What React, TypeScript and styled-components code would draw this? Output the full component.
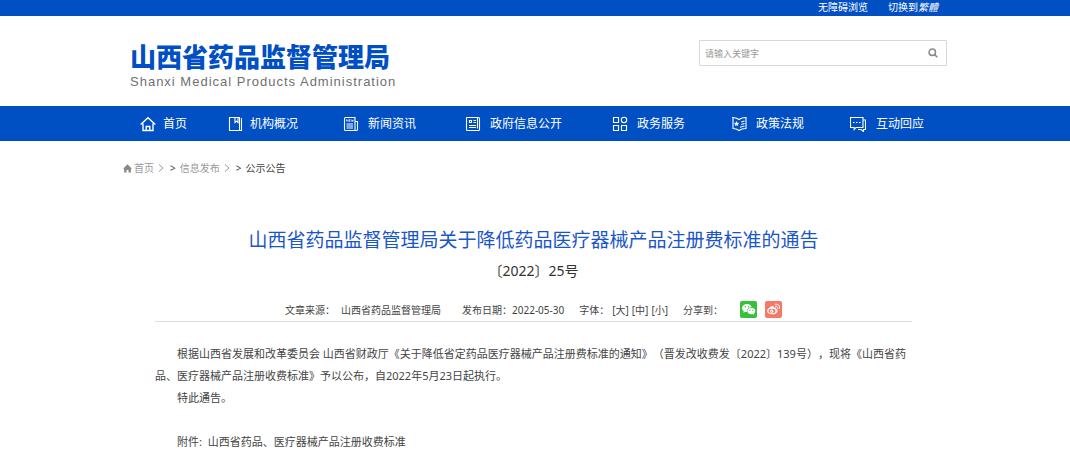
import React from "react";
import styled, { createGlobalStyle } from "styled-components";

const BLUE = "#0050c4";

const GlobalStyle = createGlobalStyle`
  * { box-sizing: border-box; }
  body {
    margin: 0;
    background: #fff;
    color: #444;
    font-family: "Noto Sans", "Noto Sans CJK SC", sans-serif;
    font-size: 10px;
    text-spacing-trim: space-all;
  }
  a { color: inherit; text-decoration: none; }
  h1, h2, p { margin: 0; font-weight: 400; }
`;

const Container = styled.div`
  width: 100%;
  max-width: 824px;
  margin: 0 auto;
`;

const TopBar = styled.div`
  background: ${BLUE};
  color: #fff;
`;

const TopLinks = styled(Container)`
  display: flex;
  justify-content: flex-end;
  gap: 20px;
  height: 16px;
  padding-right: 9px;
  line-height: 14px;
`;

const Header = styled(Container)`
  display: flex;
  justify-content: space-between;
  align-items: flex-start;
  height: 90px;
  padding: 24px 0 0 7px;
`;

const Brand = styled.a`
  display: block;
`;

const BrandName = styled.span`
  display: block;
  color: ${BLUE};
  font-family: "Noto Sans CJK SC", sans-serif;
  font-size: 26px;
  font-weight: 900;
  line-height: 32px;
`;

const BrandLatin = styled.span`
  display: block;
  color: #707070;
  font-family: "Liberation Sans", sans-serif;
  font-size: 13px;
  letter-spacing: 1px;
  line-height: 20px;
`;

const Search = styled.form`
  display: flex;
  align-items: center;
  width: 248px;
  height: 26px;
  border: 1px solid #d8d8d8;
  border-radius: 1px;
`;

const SearchInput = styled.input`
  flex: 1;
  min-width: 0;
  padding: 0 5px;
  border: 0;
  outline: 0;
  background: none;
  font: inherit;
  font-size: 9px;
  &::placeholder { color: #999; opacity: 1; }
`;

const SearchButton = styled.button`
  display: flex;
  padding: 0 8px;
  border: 0;
  background: none;
`;

const NavBar = styled.nav`
  background: ${BLUE};
  color: #fff;
`;

const NavList = styled(Container)`
  display: grid;
  grid-template-columns: 88fr 115fr 122fr 147fr 119fr 119fr 97fr;
  align-items: center;
  height: 35px;
  padding-left: 17px;
`;

const NavLink = styled.a<{ $gap: number }>`
  display: flex;
  align-items: center;
  gap: ${(p) => p.$gap}px;
  font-size: 12px;
  line-height: 18px;
  white-space: nowrap;
  svg { flex: none; }
`;

const Breadcrumb = styled(Container)`
  display: flex;
  align-items: center;
  padding-top: 19px;
  line-height: 16px;
  color: #999;
`;

const Crumb = styled.a`
  display: flex;
  align-items: center;
  gap: 2px;
`;

const Chevron = styled.svg`
  margin: 0 6px 0 4px;
`;

const Separator = styled.span`
  margin-right: 4px;
  color: #444;
`;

const CurrentCrumb = styled.span`
  color: #444;
`;

const Article = styled.main`
  width: 100%;
  max-width: 760px;
  margin: 0 auto;
  padding: 50px 3px 20px 0;
`;

const Title = styled.h1`
  color: #1a56c8;
  font-size: 19px;
  line-height: 28px;
  text-align: center;
`;

const DocNumber = styled.h2`
  margin-top: 8px;
  color: #333;
  font-size: 14px;
  line-height: 18px;
  text-align: center;
`;

const Meta = styled.div`
  display: flex;
  justify-content: center;
  align-items: center;
  gap: 15px;
  height: 23px;
  margin-top: 19px;
  padding-bottom: 2px;
  border-bottom: 1px solid #ddd;
  white-space: nowrap;
`;

const Source = styled.span`
  display: flex;
  gap: 6px;
  margin-right: 6px;
`;

const SizeButton = styled.button`
  padding: 0;
  margin-left: 3px;
  border: 0;
  background: none;
  color: inherit;
  font: inherit;
`;

const Share = styled.span`
  display: flex;
  align-items: center;
  gap: 8px;
`;

const ShareLabel = styled.span`
  margin-right: 9px;
`;

const ShareLink = styled.a<{ $color: string }>`
  display: flex;
  width: 17px;
  height: 17px;
  border-radius: 2px;
  background: ${(p) => p.$color};
`;

const Body = styled.div`
  padding-top: 21px;
  font-size: 11px;
  line-height: 22px;
`;

const Paragraph = styled.p`
  min-height: 22px;
  text-indent: 22px;
`;

const icons: Record<string, React.ReactNode> = {
  home: <path d="M.7 8.500 8 1.700l7.300 6.800M3 7.500V14.500h10V7.500M6.200 14.500v-4h3.600v4" strokeWidth="1.400" />,
  book: <path d="M1.500 1.500h10v13h-10zM7 1.500v5l1.500-1.300L10 6.500V1.500M13.500 2v12.500H3" />,
  news: (
    <>
      <path d="M2.500 1.500h9.500v13H2.500a1 1 0 0 1-1-1v-11a1 1 0 0 1 1-1zM12 5.500h2.500v8a1 1 0 0 1-1 1H12M3.500 8h6.500M3.500 10h6.500M3.500 12h6.500" />
      <path d="M3.500 5.500v-2l1.500 2v-2M7.500 3.500H6.200v2h1.300M6.200 4.500h1M8.400 3.500l.5 2 .5-1.500.5 1.500.5-2" strokeWidth=".6" />
    </>
  ),
  info: (
    <>
      <path d="M1.500 1.500H12.500M1.500 1.500v12a1 1 0 0 0 1 1h11a1 1 0 0 0 1-1V2.500a1 1 0 0 0-1-1h-1v11" />
      <path d="M4.500 4.500h2v2h-2zM8.500 4.500H11M8.500 6.500H11M4 9.500h7M4 11.500h7" />
    </>
  ),
  grid: (
    <>
      <path d="M1.500 1.500h5v5h-5zM1.500 9.500h5v5h-5zM9.500 9.500h5v5h-5z" />
      <circle cx="12" cy="4" r="2.700" />
    </>
  ),
  law: (
    <>
      <path d="M1 1.500c3 0 5 .5 7 2 2-1.500 4-2 7-2v11c-3 0-5 .5-7 2-2-1.500-4-2-6-2V1.700M10.200 6l3.300-1M10.200 8.500l3.300-1M9 11.200l4.500-1.200" />
      <path d="m5.500 5 .8 1.700 1.900.2-1.400 1.300.4 1.900-1.700-.9-1.700.9.4-1.900-1.400-1.300 1.900-.2z" fill="currentColor" stroke="none" />
    </>
  ),
  chat: <path d="M.500 1.500h12.500v10H6l-1.800 2v-2H.500zM13 4h2.500v9.500h-2v2l-2.500-2H8M3 6.500h1.500M6 6.500h1.500M9 6.500h1.500" />,
};

const navItems = [
  { label: "首页", icon: "home", gap: 7 },
  { label: "机构概况", icon: "book", gap: 6 },
  { label: "新闻资讯", icon: "news", gap: 9 },
  { label: "政府信息公开", icon: "info", gap: 9 },
  { label: "政务服务", icon: "grid", gap: 9 },
  { label: "政策法规", icon: "law", gap: 9 },
  { label: "互动回应", icon: "chat", gap: 10 },
];

const ChevronRight = () => (
  <Chevron width="6" height="8" viewBox="0 0 6 8" fill="none" stroke="#999" aria-hidden="true">
    <path d="m1 .5 4 3.500-4 3.500" />
  </Chevron>
);

export default function App() {
  return (
    <>
      <GlobalStyle />
      <TopBar>
        <TopLinks>
          <a href="#accessible">无障碍浏览</a>
          <a href="#traditional">切换到<em>繁體</em></a>
        </TopLinks>
      </TopBar>
      <Header as="header">
        <Brand href="#home">
          <BrandName>山西省药品监督管理局</BrandName>
          <BrandLatin>Shanxi Medical Products Administration</BrandLatin>
        </Brand>
        <Search role="search" onSubmit={(e) => e.preventDefault()}>
          <SearchInput type="text" placeholder="请输入关键字" aria-label="请输入关键字" />
          <SearchButton type="submit" aria-label="搜索">
            <svg width="10" height="10" viewBox="0 0 10 10" fill="none" stroke="#888" strokeWidth="1.500">
              <circle cx="4.300" cy="4.200" r="3.200" />
              <path d="M6.700 6.600 9.300 9.200" />
            </svg>
          </SearchButton>
        </Search>
      </Header>
      <NavBar>
        <NavList>
          {navItems.map((item) => (
            <NavLink key={item.label} href={`#${item.icon}`} $gap={item.gap}>
              <svg width="16" height="16" viewBox="0 0 16 16" fill="none" stroke="currentColor" strokeWidth="1.100" aria-hidden="true">
                {icons[item.icon]}
              </svg>
              {item.label}
            </NavLink>
          ))}
        </NavList>
      </NavBar>
      <Breadcrumb>
        <Crumb href="#home">
          <svg width="9" height="9" viewBox="0 0 9 9" fill="#888" aria-hidden="true">
            <path d="M4.500.300 9 4.700H7.900V8.600H5.500V6h-2v2.600H1.100V4.700H0z" />
          </svg>
          首页
        </Crumb>
        <ChevronRight />
        <Separator>&gt;</Separator>
        <Crumb href="#news">信息发布</Crumb>
        <ChevronRight />
        <Separator>&gt;</Separator>
        <CurrentCrumb>公示公告</CurrentCrumb>
      </Breadcrumb>
      <Article>
        <Title>山西省药品监督管理局关于降低药品医疗器械产品注册费标准的通告</Title>
        <DocNumber>〔2022〕25号</DocNumber>
        <Meta>
          <Source><span>文章来源：</span><span>山西省药品监督管理局</span></Source>
          <span>发布日期：2022-05-30</span>
          <span>
            字体：
            <SizeButton type="button">[大]</SizeButton>
            <SizeButton type="button">[中]</SizeButton>
            <SizeButton type="button">[小]</SizeButton>
          </span>
          <Share>
            <ShareLabel>分享到：</ShareLabel>
            <ShareLink href="#wechat" aria-label="微信" $color="#36c03c">
              <svg width="17" height="17" viewBox="0 0 17 17" fill="#fff">
                <path d="M7 3C4.200 3 2 4.700 2 7c0 1.300.7 2.400 1.800 3.100l-.5 1.600 1.900-1c.5.2 1.100.3 1.700.3-.6-2.700 1.600-4.800 4.800-4.800C11.200 4.300 9.400 3 7 3z" />
                <path d="M11.300 6.800c-2.300 0-4 1.400-4 3.200s1.700 3.300 4 3.300c.5 0 .9-.1 1.300-.2l1.600.8-.4-1.300c.9-.6 1.500-1.500 1.500-2.600 0-1.800-1.800-3.200-4-3.200z" />
                <g fill="#36c03c">
                  <circle cx="5.300" cy="5.800" r=".7" /><circle cx="8.500" cy="5.800" r=".7" />
                  <circle cx="10" cy="9.200" r=".6" /><circle cx="12.700" cy="9.200" r=".6" />
                </g>
              </svg>
            </ShareLink>
            <ShareLink href="#weibo" aria-label="微博" $color="#f57968">
              <svg width="17" height="17" viewBox="0 0 17 17" fill="none">
                <path fill="#fff" d="M7 5.300c1.300-.5 2 .1 1.600 1.400 1.700-.6 2.900-.1 2.500 1.200 1 .3 1.700 1 1.500 2-.3 2-2.700 3.400-5.500 3.400-2.900 0-5-1.300-5-3.200C2.100 8.400 4.600 6.100 7 5.300z" />
                <ellipse cx="7" cy="10" rx="3.500" ry="2.300" fill="#f57968" />
                <circle cx="6.700" cy="10.200" r="1.600" fill="#fff" />
                <circle cx="6.300" cy="10.500" r=".6" fill="#f57968" />
                <path d="M10.500 5.200c1.500-.3 2.400.7 2 2.100M10.300 3.200c3-.6 5 1.700 4 4.500" stroke="#fff" strokeLinecap="round" />
              </svg>
            </ShareLink>
          </Share>
        </Meta>
        <Body>
          <Paragraph>
            根据山西省发展和改革委员会 山西省财政厅《关于降低省定药品医疗器械产品注册费标准的通知》（晋发改收费发〔2022〕139号），现将《山西省药品、医疗器械产品注册收费标准》予以公布，自2022年5月23日起执行。
          </Paragraph>
          <Paragraph>特此通告。</Paragraph>
          <Paragraph />
          <Paragraph>附件:&nbsp; <a href="#attachment">山西省药品、医疗器械产品注册收费标准</a></Paragraph>
        </Body>
      </Article>
    </>
  );
}
